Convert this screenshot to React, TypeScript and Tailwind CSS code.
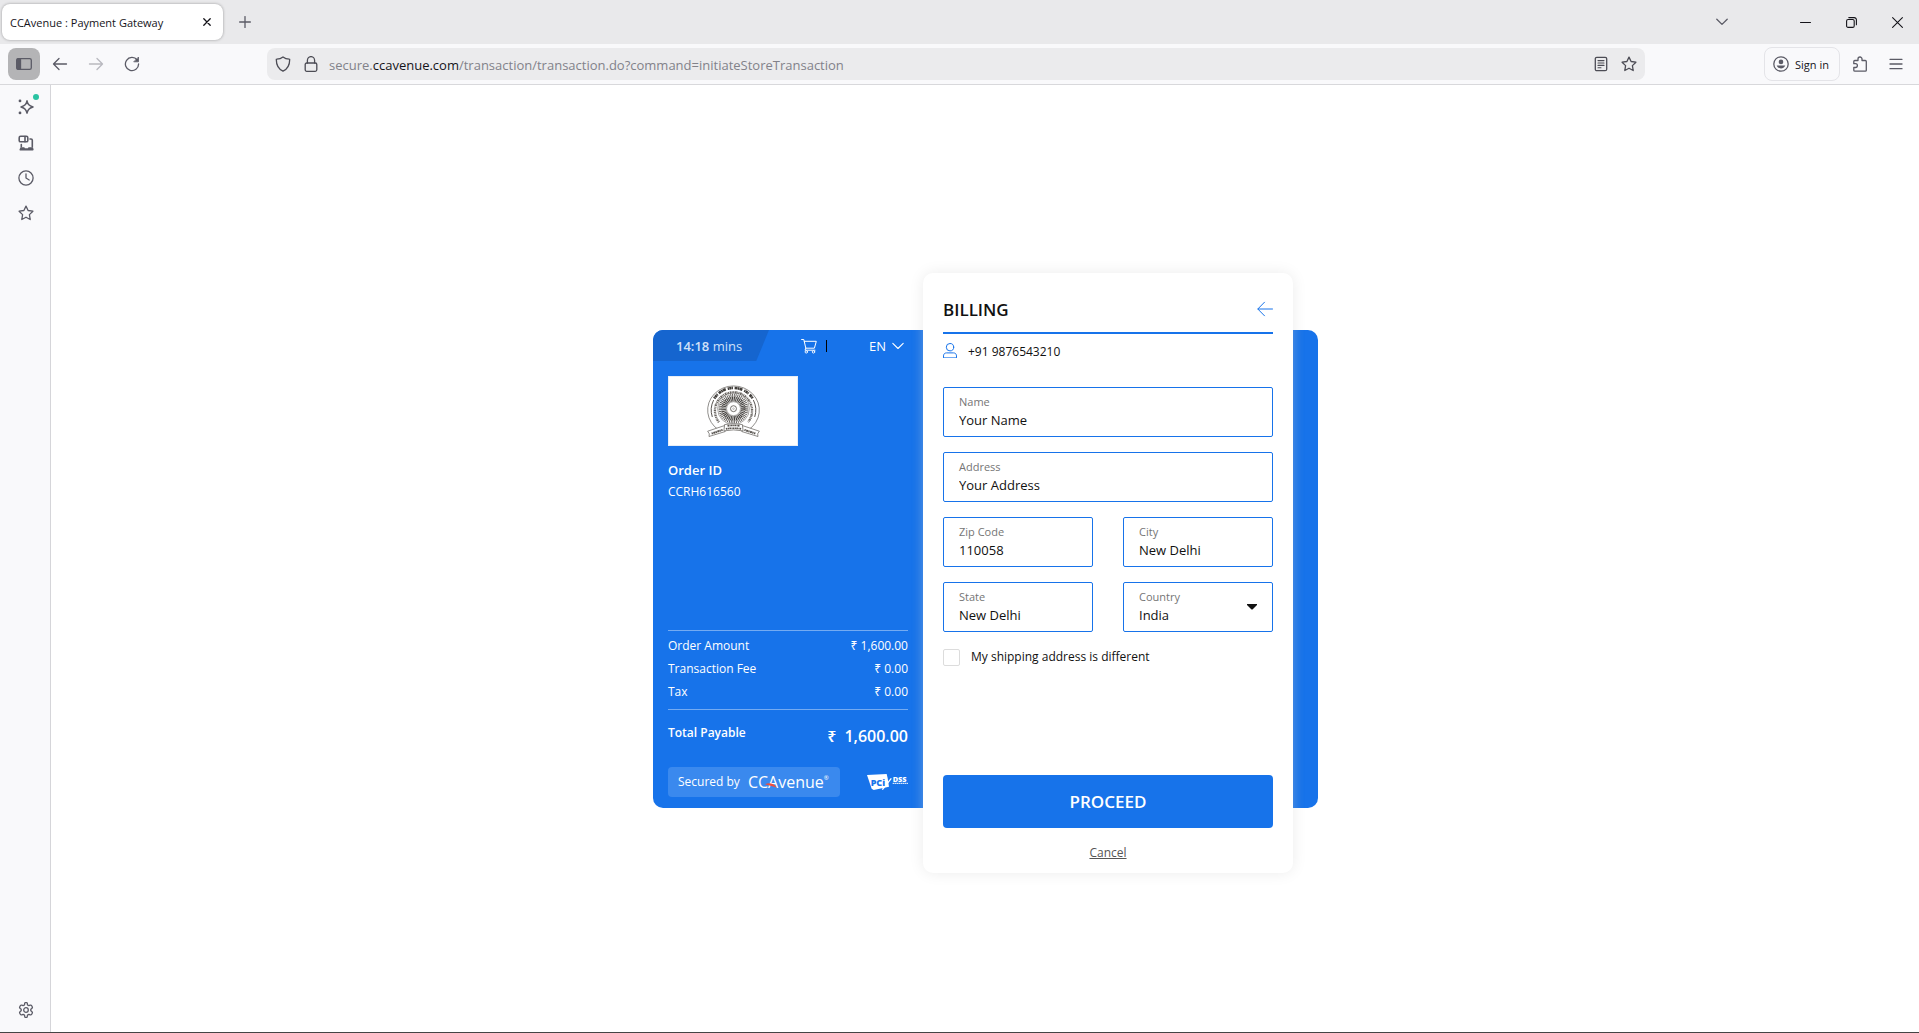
import React, { useId, type ReactNode } from "react";

type IconProps = { children: ReactNode; size?: string; box?: string; className?: string };

function Icon({ children, box = "0 0 16 16", size = "size-4", className = "" }: IconProps) {
  return (
    <svg
      viewBox={box}
      className={`${size} shrink-0 ${className}`}
      fill="none"
      stroke="currentColor"
      strokeWidth="1.3"
      strokeLinecap="round"
      strokeLinejoin="round"
      aria-hidden="true"
    >
      {children}
    </svg>
  );
}

const starPath =
  "M8 1.1l2.1 4.4 4.8.7-3.5 3.4.8 4.9L8 12.2l-4.2 2.3.8-4.9L1.1 6.2l4.8-.7z";

function TabBar() {
  return (
    <div className="flex h-11 items-center bg-[#e9e9eb] pl-0.5 text-[#5b5b66]">
      <div className="flex h-9 w-[221px] items-center justify-between rounded-lg bg-white pr-3 pl-2 text-[#15141a] shadow-[0_0_3px_rgba(0,0,0,0.35)]">
        <span className="whitespace-nowrap pt-px text-[11px]/4">CCAvenue : Payment Gateway</span>
        <button aria-label="Close tab">
          <Icon size="size-2" box="0 0 8 8">
            <path d="M.8.8l6.4 6.4M7.2.8L.8 7.2" />
          </Icon>
        </button>
      </div>
      <button aria-label="New tab" className="ml-4">
        <Icon size="size-3" box="0 0 12 12">
          <path d="M6 .6v10.8M.6 6h10.8" />
        </Icon>
      </button>
      <div className="ml-auto flex items-center pr-4 text-[#15141a]">
        <button aria-label="List all tabs" className="mr-[72px] text-[#5b5b66]">
          <Icon size="size-3" box="0 0 12 12">
            <path d="M.8 3.2L6 8.4l5.2-5.2" />
          </Icon>
        </button>
        <button aria-label="Minimize" className="mr-[35px]">
          <Icon size="size-[11px]" box="0 0 11 11">
            <path d="M.5 5.5h10" strokeWidth="1" />
          </Icon>
        </button>
        <button aria-label="Restore" className="mr-[35px]">
          <Icon size="size-[11px]" box="0 0 11 11">
            <rect x=".6" y="2.5" width="7.6" height="7.9" rx="1.5" strokeWidth="1.1" />
            <path d="M2.8.6h5.4a2.2 2.2 0 0 1 2.2 2.2v5" strokeWidth="1.1" />
          </Icon>
        </button>
        <button aria-label="Close window">
          <Icon size="size-[11px]" box="0 0 11 11">
            <path d="M.6.6l9.8 9.8M10.4.6L.6 10.4" strokeWidth="1.1" />
          </Icon>
        </button>
      </div>
    </div>
  );
}

function Toolbar() {
  return (
    <div className="flex h-10 items-center bg-[#f9f9fb] pr-[15px] pl-2 text-[#5b5b66]">
      <button
        aria-label="Toggle sidebar"
        className="flex size-8 items-center justify-center rounded-lg bg-[#b4b4b6]"
      >
        <Icon>
          <rect x=".7" y="2.7" width="14.6" height="10.6" rx="1.6" />
          <path d="M1.2 3h3.3v10H1.2z" fill="currentColor" />
        </Icon>
      </button>
      <button aria-label="Back" className="ml-3">
        <Icon>
          <path d="M14.5 8H1.5M7 2.5L1.5 8 7 13.5" />
        </Icon>
      </button>
      <button aria-label="Forward" className="ml-5 opacity-40">
        <Icon>
          <path d="M1.5 8h13M9 2.5L14.5 8 9 13.5" />
        </Icon>
      </button>
      <button aria-label="Reload" className="ml-5">
        <Icon>
          <path d="M13.2 4A6.6 6.6 0 1 0 14.6 8" />
          <path d="M14.5 1.4v4.4h-4.4z" fill="currentColor" strokeWidth=".8" />
        </Icon>
      </button>
      <div className="ml-[127px] flex h-8 w-[1378px] min-w-0 items-center rounded-lg bg-[#ebebed] px-2 text-[#4c4c55]">
        <Icon>
          <path d="M8 .9C6.500 2.100 3.900 3 1.700 3.100c-.2 0-.4.2-.4.400C1.300 8.500 2.900 12.800 8 15.200c5.100-2.400 6.700-6.700 6.700-11.700 0-.2-.2-.4-.4-.4C12.100 3 9.500 2.100 8 .9z" />
        </Icon>
        <Icon className="ml-3">
          <rect x="2.200" y="7" width="11.600" height="8.300" rx="1.500" />
          <path d="M4.400 7V4.200a3.600 3.600 0 0 1 7.200 0V7" />
        </Icon>
        <div
          role="textbox"
          aria-label="Address bar"
          contentEditable
          suppressContentEditableWarning
          className="ml-[10px] min-w-0 flex-1 truncate pt-0.5 text-[13px]/5 text-[#82828a] outline-none"
        >
          secure.<span className="text-[#15141a]">ccavenue.com</span>
          /transaction/transaction.do?command=initiateStoreTransaction
        </div>
        <button aria-label="Reader view" className="mr-3">
          <Icon>
            <rect x="2.300" y="1.300" width="11.400" height="13.400" rx="1.500" />
            <path d="M5 4.600h6M5 7h6M5 9.400h6M5 11.800h3" strokeWidth="1.100" />
          </Icon>
        </button>
        <button aria-label="Bookmark this page">
          <Icon>
            <path d={starPath} />
          </Icon>
        </button>
      </div>
      <button className="ml-auto flex h-[34px] w-[76px] items-center gap-1.5 rounded-lg border border-[#e4e4e8] pl-2 text-[11px]/4 whitespace-nowrap text-[#15141a]">
        <Icon className="text-[#5b5b66]">
          <circle cx="8" cy="8" r="7.200" />
          <circle cx="8" cy="5.900" r="2.300" fill="currentColor" stroke="none" />
          <path d="M4 9.400h8c.3 0 .3.200.2.400-.8 1.600-2.400 2.700-4.200 2.700s-3.400-1.100-4.200-2.700c-.1-.2-.1-.4.200-.4z" fill="currentColor" stroke="none" />
        </Icon>
        <span className="pt-px">Sign in</span>
      </button>
      <button aria-label="Extensions" className="ml-3">
        <Icon>
          <path d="M3 15.200h10.300c.6 0 1-.4 1-1V5.500c0-.6-.4-1-1-1H10V3a2 2 0 0 0-4 0v1.500H2.800c-.6 0-1 .4-1 1v2.200h1.700a1.900 1.900 0 0 1 0 3.800H1.800v2.700c0 .6.500 1 1.200 1z" />
        </Icon>
      </button>
      <button aria-label="Menu" className="ml-5">
        <Icon>
          <path d="M2 3.300h12M2 8h12M2 12.700h12" />
        </Icon>
      </button>
    </div>
  );
}

function Sidebar() {
  return (
    <nav
      aria-label="Sidebar"
      className="flex w-[51px] shrink-0 flex-col items-center border-r border-[#d5d5d9] bg-[#f9f9fb] pt-3.5 pb-[14px] pl-0.5 text-[#5b5b66]"
    >
      <button aria-label="AI chatbot" className="relative">
        <Icon>
          <path d="M9 1.800c.9 3.800 2 4.900 6 6.200-4 1.300-5.100 2.400-6 6.200-.9-3.800-2-4.900-6-6.200 4-1.300 5.100-2.400 6-6.200z" strokeWidth="1.500" />
          <circle cx="2" cy="1.900" r="1.400" fill="currentColor" stroke="none" />
          <circle cx="2" cy="13.900" r="1.400" fill="currentColor" stroke="none" />
        </Icon>
        <span className="absolute -top-[5px] -right-[5px] size-1.5 rounded-full bg-[#2ac3a2]" />
      </button>
      <button aria-label="Synced tabs" className="mt-5">
        <Icon>
          <rect x="1.200" y="1.300" width="8.600" height="5.500" rx="1.400" strokeWidth="1.600" />
          <path d="M7 1.500v5.200M12 4h1a1.300 1.300 0 0 1 1.300 1.300v6.500M3.300 9.500v2.300" strokeWidth="1.600" />
          <path d="M2.500 12.200h3.800l.6 1h3l.6-1H15l.6 2.400c0 .7-.3 1-.9 1H2.400c-.7 0-.9-.4-.9-1z" fill="currentColor" stroke="none" />
        </Icon>
      </button>
      <button aria-label="History" className="mt-[19px]">
        <Icon>
          <circle cx="8" cy="8" r="7.100" />
          <path d="M8 3.800V8l3.200 2" />
        </Icon>
      </button>
      <button aria-label="Bookmarks" className="mt-[19px]">
        <Icon>
          <path d={starPath} />
        </Icon>
      </button>
      <button aria-label="Customize sidebar" className="mt-auto">
        <Icon>
          <path d="M6.700 1.700a1.300 1.300 0 0 1 2.600 0l.2 1.200 1.400.8 1.300-.5a1.300 1.300 0 0 1 1.500.600l.5.900a1.300 1.300 0 0 1-.4 1.700l-1 .800v1.600l1 .800a1.300 1.300 0 0 1 .4 1.700l-.5.900a1.300 1.300 0 0 1-1.500.600l-1.300-.5-1.400.8-.2 1.200a1.300 1.300 0 0 1-2.600 0l-.2-1.200-1.400-.8-1.300.5a1.300 1.300 0 0 1-1.500-.6l-.5-.9a1.300 1.300 0 0 1 .4-1.700l1-.8V7.200l-1-.8a1.300 1.300 0 0 1-.4-1.700l.5-.9a1.300 1.300 0 0 1 1.500-.6l1.300.5 1.400-.8z" />
          <circle cx="8" cy="8" r="2.300" />
        </Icon>
      </button>
    </nav>
  );
}

function Emblem() {
  return (
    <svg viewBox="0 0 160 156" className="h-[52px] w-[53px]" fill="none" stroke="#57534f" aria-label="Merchant emblem" role="img">
      <path d="M35 135A78 73 0 1 1 125 135" strokeWidth="2" />
      <path d="M16 96A67 67 0 0 1 20 45M144 96A67 67 0 0 0 140 45" strokeWidth="3" />
      <path d="M22 40A69 69 0 0 1 138 40" strokeWidth="8" strokeDasharray="4 1 7 1 3 5 8 1 5 1 9 6" stroke="#3f3c39" />
      <path d="M36 112A56 56 0 1 1 124 112" strokeWidth="7" strokeDasharray="3 2 5 1.500 2 2" stroke="#6b6763" />
      <circle cx="80" cy="71" r="48" strokeWidth="1.500" />
      <circle cx="80" cy="71" r="40" strokeWidth="10" strokeDasharray="2.600 2.636" />
      <circle cx="80" cy="71" r="29" strokeWidth="14" strokeDasharray="3.400 1.656" stroke="#45423f" />
      <circle cx="80" cy="71" r="21" fill="#fff" strokeWidth="1.500" />
      <circle cx="80" cy="71" r="9" strokeWidth="2.500" />
      <circle cx="80" cy="71" r="2.500" strokeWidth="1" />
      <path d="M53 122L2 139l5 8-1 8 49-15zM107 122l51 17-5 8 1 8-49-15z" fill="#fff" strokeWidth="2" />
      <path d="M53 119q27-6 54 0l2 19q-29-6-58 0z" fill="#fff" strokeWidth="2" />
      <path d="M62 123q18-3 36 0M57 132q23-4 46 0" strokeWidth="5" strokeDasharray="5 1.500 3 1" />
      <path d="M14 146l33-11M113 135l33 11" strokeWidth="6" strokeDasharray="4 1.500 6 1" />
    </svg>
  );
}

function CcAvenueLogo() {
  return (
    <span className="relative flex items-start text-base/5">
      CCAvenue
      <span className="text-[6px]/3">®</span>
      <svg viewBox="0 0 12 5" className="absolute top-[11px] left-[17px] h-[5px] w-3" aria-hidden="true">
        <path d="M0 1.200C4-.6 9 .2 12 4.800 8 3.200 5 2.800 0 1.200z" fill="#f04e3e" />
      </svg>
    </span>
  );
}

function PciLogo() {
  return (
    <svg viewBox="0 0 123 48" className="h-4 w-[41px]" role="img" aria-label="PCI DSS">
      <path d="M0 3L59 0 62 13 66 38 20 48 14 44z" fill="#fff" />
      <path d="M46 47L73 13" stroke="#fff" strokeWidth="4" />
      <text x="11" y="35" fontFamily="Open Sans" fontWeight="800" fontSize="27" fill="#1773ea">
        PCi
      </text>
      <text x="77" y="23" fontFamily="Open Sans" fontWeight="800" fontSize="22" fill="#fff">
        DSS
      </text>
      <path d="M77 28h46" stroke="#fff" strokeWidth="3" strokeDasharray="5 1" />
    </svg>
  );
}

const charges = [
  { label: "Order Amount", value: "₹ 1,600.00" },
  { label: "Transaction Fee", value: "₹ 0.00" },
  { label: "Tax", value: "₹ 0.00" },
];

function OrderSummary() {
  return (
    <aside className="flex w-[270px] shrink-0 flex-col text-xs text-white">
      <div className="flex h-[31px] items-center pt-px">
        <div className="-mt-px flex h-[31px] w-[116px] items-center rounded-tl-[10px] bg-[#1565cf] pt-0.5 pl-[23px] text-[13px] text-[#d0e0f8] [clip-path:polygon(0_0,100%_0,89%_100%,0_100%)]">
          <span>
            <b className="font-semibold">14:18</b> mins
          </span>
        </div>
        <button aria-label="Cart" className="mr-[9px] ml-8">
          <Icon>
            <path d="M.6 1.500h2.200l2 8.700h8.600l1.900-6.900H3.300M4.800 10.200L4 12.200h10" strokeWidth="1" />
            <circle cx="5.300" cy="13.900" r="1.200" strokeWidth=".9" />
            <circle cx="12.500" cy="13.900" r="1.200" strokeWidth=".9" />
          </Icon>
        </button>
        <span className="h-3 w-px bg-black" />
        <button className="ml-[42px] flex items-center gap-1.5 pt-px text-[13px]">
          EN
          <Icon size="size-3" box="0 0 12 12">
            <path d="M.8 3.300L6 8.500l5.200-5.200" strokeWidth="1.100" />
          </Icon>
        </button>
      </div>
      <div className="flex flex-1 flex-col px-[15px] pt-[15px] pb-[11px]">
        <div className="flex h-[70px] w-[130px] items-center justify-center border border-[#e8eef6] bg-white">
          <Emblem />
        </div>
        <p className="mt-3.5 text-[13px]/5 font-semibold">Order ID</p>
        <p className="mt-0.5 leading-5">CCRH616560</p>
        <dl className="mt-auto border-y border-[#74abf2] pt-[3px] pb-1.5">
          {charges.map((c) => (
            <div key={c.label} className="flex h-[23px] items-center justify-between">
              <dt>{c.label}</dt>
              <dd>{c.value}</dd>
            </div>
          ))}
        </dl>
        <div className="flex justify-between pt-[13px] font-semibold">
          <span className="leading-5">Total Payable</span>
          <span className="flex gap-2 text-base/[26px]">
            <span>₹</span> 1,600.00
          </span>
        </div>
        <div className="mt-[18px] flex items-center justify-between">
          <div className="flex h-[30px] w-[172px] items-center gap-2 rounded-sm bg-[#3a89ee] pl-2.5 whitespace-nowrap">
            Secured by
            <CcAvenueLogo />
          </div>
          <PciLogo />
        </div>
      </div>
    </aside>
  );
}

const fieldBox = "relative flex h-[50px] flex-col rounded-[2px] border border-[#1773ea] pt-1.5";
const fieldLabel = "px-[15px] text-[11px]/4 text-[#757575]";
const fieldInput = "w-full bg-transparent px-[15px] text-[13px]/5 text-[#111] outline-none";

function Field({ label, value, wide }: { label: string; value: string; wide?: boolean }) {
  const id = useId();
  return (
    <div className={`${fieldBox} ${wide ? "col-span-2" : ""}`}>
      <label htmlFor={id} className={fieldLabel}>
        {label}
      </label>
      <input id={id} defaultValue={value} className={fieldInput} />
    </div>
  );
}

function BillingForm() {
  return (
    <form
      className="-mt-[57px] mr-[25px] -mb-[65px] flex h-[600px] flex-1 flex-col rounded-[10px] bg-white px-5 shadow-[0_0_15px_rgba(0,0,0,0.08),0_0_12px_rgba(255,255,255,0.35)]"
      onSubmit={(e) => e.preventDefault()}
    >
      <div className="flex h-[61px] items-center justify-between border-b-2 border-[#1773ea] pt-3.5">
        <h1 className="text-[17px]/6 font-semibold text-[#111]">BILLING</h1>
        <button type="button" aria-label="Go back" className="pb-0.5 text-[#1773ea]">
          <Icon>
            <path d="M15.500 8H1M7.500 1.200L.8 8l6.700 6.800" strokeWidth="1" />
          </Icon>
        </button>
      </div>
      <div className="mt-2 flex h-5 items-center gap-2.5 text-xs text-[#111]">
        <Icon box="0 0 15 15" size="size-[15px]" className="mb-1 text-[#1773ea]">
          <circle cx="7" cy="4.200" r="3.700" strokeWidth="1" />
          <path d="M.5 14.500v-1.600c0-1.800 1.200-3 3-3h7c1.800 0 3 1.200 3 3v1.600z" strokeWidth="1" />
        </Icon>
        +91 9876543210
      </div>
      <div className="mt-[25px] grid grid-cols-2 gap-x-[30px] gap-y-[15px]">
        <Field label="Name" value="Your Name" wide />
        <Field label="Address" value="Your Address" wide />
        <Field label="Zip Code" value="110058" />
        <Field label="City" value="New Delhi" />
        <Field label="State" value="New Delhi" />
        <div className={fieldBox}>
          <label htmlFor="country" className={fieldLabel}>
            Country
          </label>
          <select id="country" defaultValue="India" className={`${fieldInput} appearance-none`}>
            <option>India</option>
          </select>
          <svg viewBox="0 0 10 6" className="pointer-events-none absolute top-[21px] right-[15px] h-1.5 w-2.5" aria-hidden="true">
            <path d="M0 0h10v1L5.500 5.500h-1L0 1z" fill="#111" />
          </svg>
        </div>
      </div>
      <label className="mt-[15px] flex h-5 items-center gap-[11px] text-xs text-[#111]">
        <input type="checkbox" className="size-[17px] appearance-none rounded-[2px] border border-[#dcdcdc] checked:bg-[#1773ea]" />
        My shipping address is different
      </label>
      <button className="mt-auto h-[53px] shrink-0 rounded-[4px] bg-[#1773ea] text-[17px]/6 font-semibold text-white">
        PROCEED
      </button>
      <a href="#cancel" className="mx-auto mt-[15px] mb-2.5 text-xs/5 text-[#555] underline">
        Cancel
      </a>
    </form>
  );
}

export default function App() {
  return (
    <div className="flex min-h-screen flex-col border-b border-[#444] bg-white font-['Open_Sans','Noto_Sans',sans-serif]">
      <header className="border-b border-[#d8d8db]">
        <TabBar />
        <Toolbar />
      </header>
      <div className="flex flex-1">
        <Sidebar />
        <main className="flex flex-1 items-center justify-center pt-[21px] pl-px">
          <div className="flex w-[665px] rounded-[10px] bg-[#1773ea]">
            <OrderSummary />
            <BillingForm />
          </div>
        </main>
      </div>
    </div>
  );
}
